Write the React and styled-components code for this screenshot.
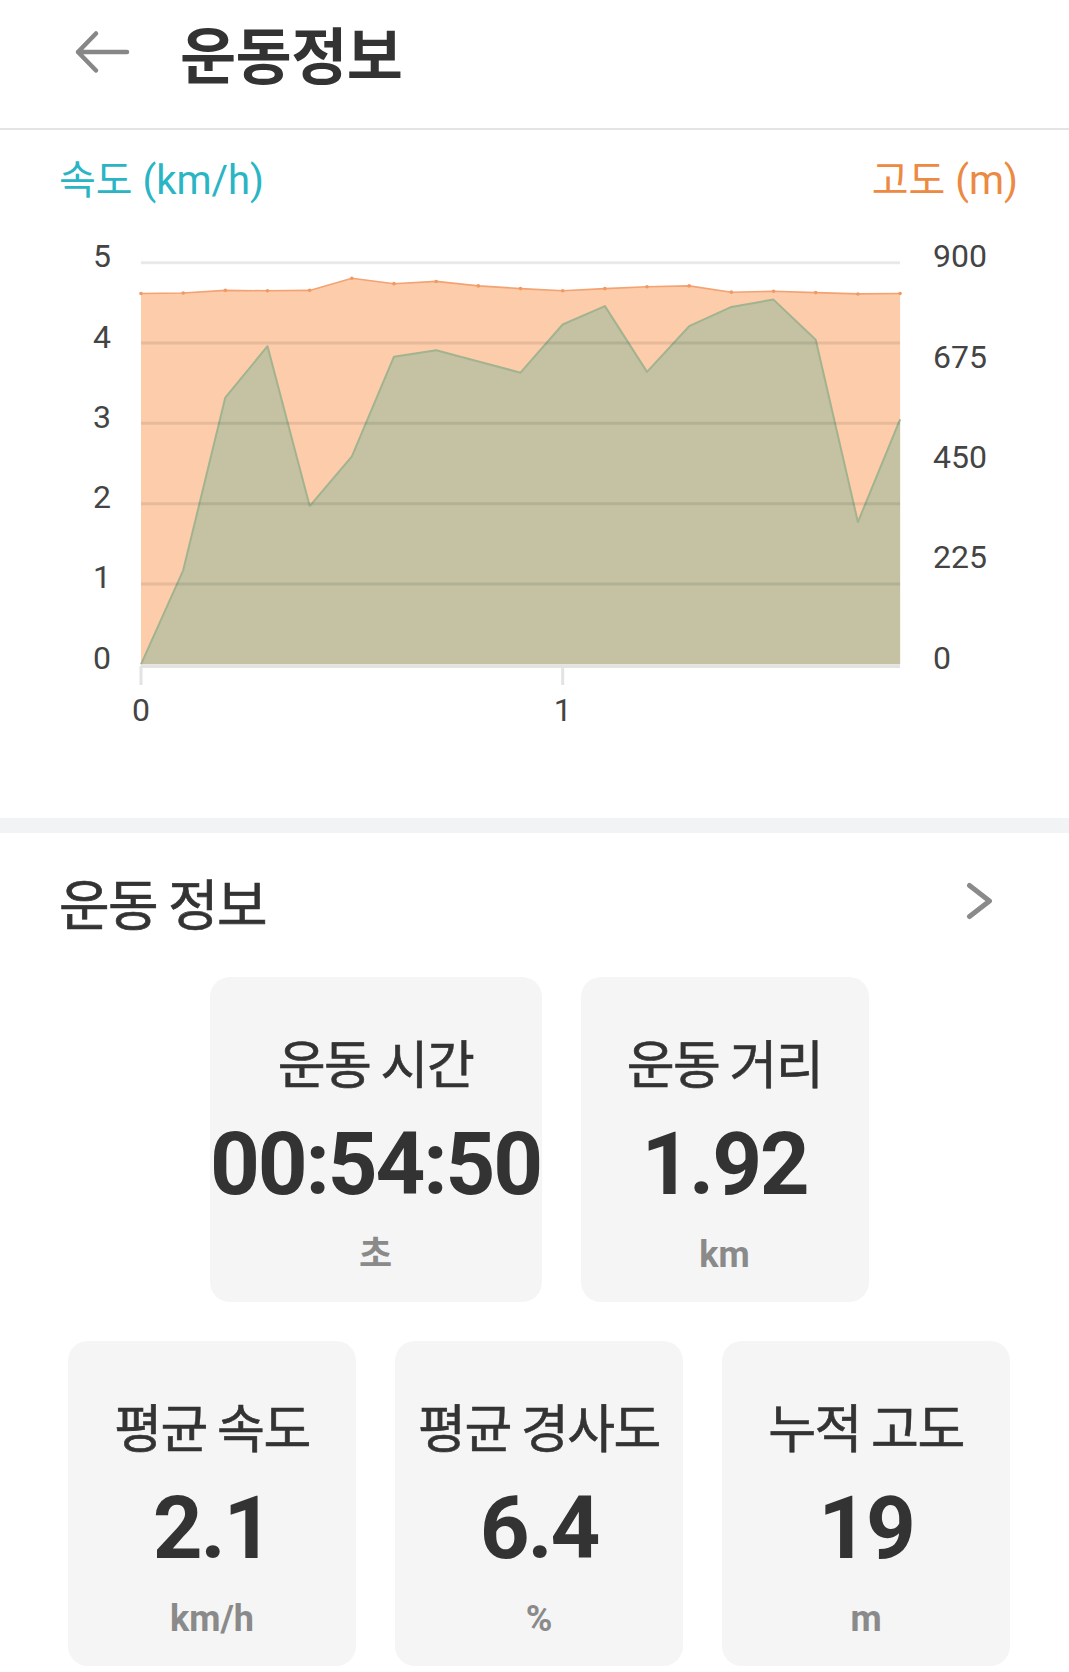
import React from "react";
import styled, { createGlobalStyle } from "styled-components";

const GlobalStyle = createGlobalStyle`
  *, *::before, *::after { box-sizing: border-box; }
  html, body { margin: 0; padding: 0; background: #ffffff; }
  body { font-family: Roboto, "Noto Sans CJK KR", sans-serif; color: #333333; }
`;

const KR = `"Noto Sans CJK KR", "Noto Sans", sans-serif`;
const NUM = `Roboto, "Noto Sans CJK KR", sans-serif`;

const Page = styled.div`
  width: 1069px;
  min-height: 1672px;
  background: #ffffff;
`;

const Header = styled.header`
  height: 130px;
  padding: 0 0 24px 73px;
  display: flex;
  align-items: center;
  border-bottom: 2px solid #e4e4e4;
`;

const BackButton = styled.button`
  width: 58px;
  height: 46px;
  padding: 0;
  border: 0;
  background: none;
  display: flex;
  align-items: center;
  justify-content: center;
  margin-right: 49px;
`;

const Title = styled.h1`
  margin: 0;
  font-family: ${KR};
  font-weight: 700;
  font-size: 61px;
  line-height: 61px;
  letter-spacing: -0.5px;
  color: #333333;
`;

const ChartSection = styled.section`
  padding-bottom: 58px;
`;

const LegendRow = styled.div`
  height: 85px;
  padding: 29px 51px 0 59px;
  display: flex;
  justify-content: space-between;
  align-items: flex-start;
`;

const Legend = styled.span`
  font-family: ${NUM};
  font-size: 40px;
  line-height: 44px;
  color: ${(p) => p.$color};
`;

const ChartSvg = styled.svg`
  display: block;
`;

const Divider = styled.div`
  height: 15px;
  background: #f2f3f5;
`;

const InfoHeader = styled.div`
  height: 136px;
  padding: 0 76px 0 59px;
  display: flex;
  align-items: center;
  justify-content: space-between;
`;

const SectionTitle = styled.h2`
  margin: 0;
  font-family: ${KR};
  font-weight: 400;
  font-size: 55px;
  line-height: 55px;
  letter-spacing: -1.5px;
  color: #333333;
  -webkit-text-stroke: 0.7px #333333;
`;

const CardGrid = styled.div`
  padding: 8px 59px 0 68px;
  display: flex;
  flex-direction: column;
  gap: 39px;
`;

const CardRow = styled.div`
  display: flex;
  justify-content: center;
  gap: 39px;
`;

const Card = styled.div`
  width: ${(p) => p.$width || 288}px;
  height: 325px;
  border-radius: 20px;
  background: #f5f5f5;
  display: flex;
  flex-direction: column;
  align-items: center;
`;

const CardTitle = styled.div`
  margin-top: 59px;
  font-family: ${KR};
  font-weight: 400;
  font-size: 52px;
  line-height: 52px;
  letter-spacing: -1.5px;
  color: #333333;
  -webkit-text-stroke: 0.6px #333333;
  white-space: nowrap;
`;

const CardValue = styled.div`
  margin-top: 33px;
  font-family: ${NUM};
  font-weight: 700;
  font-size: 87px;
  line-height: 87px;
  letter-spacing: -2.2px;
  color: #333333;
  white-space: nowrap;
`;

const CardUnit = styled.div`
  margin-top: 29px;
  font-family: ${NUM};
  font-weight: 700;
  font-size: 36px;
  line-height: 36px;
  color: #8a8a8a;
`;

/* ---------- chart data ---------- */
const X0 = 141;
const XSCALE = 421.7; // px per km
const Y0 = 664.3;
const SPEED_SCALE = 80.32; // px per km/h
const ALT_SCALE = 401.6 / 900; // px per m

const dist = [0, 0.1, 0.2, 0.3, 0.4, 0.5, 0.6, 0.7, 0.8, 0.9, 1.0, 1.1, 1.2, 1.3, 1.4, 1.5, 1.6, 1.7, 1.8];
const speed = [0, 1.17, 3.32, 3.96, 1.97, 2.59, 3.83, 3.91, 3.77, 3.63, 4.23, 4.46, 3.64, 4.21, 4.45, 4.54, 4.04, 1.77, 3.05];
const alt = [831, 832, 838, 837, 838, 865, 853, 858, 848, 842, 837, 842, 846, 848, 834, 836, 833, 830, 831];

const px = (d) => X0 + d * XSCALE;
const sy = (v) => Y0 - v * SPEED_SCALE;
const ay = (v) => Y0 - v * ALT_SCALE;
const XEND = px(dist[dist.length - 1]);

const linePts = (ys) => dist.map((d, i) => `${px(d).toFixed(1)},${ys[i].toFixed(1)}`).join(" L");
const altLine = "M" + linePts(alt.map(ay));
const speedLine = "M" + linePts(speed.map(sy));
const altArea = `M${X0},${Y0} L${linePts(alt.map(ay))} L${XEND.toFixed(1)},${Y0} Z`;
const speedArea = `${speedLine} L${XEND.toFixed(1)},${Y0} Z`;

const leftTicks = [5, 4, 3, 2, 1, 0];
const rightTicks = [900, 675, 450, 225, 0];

function Chart() {
  return (
    <ChartSvg width="1069" height="545" viewBox="0 215 1069 545">
      <path d={altArea} fill="#fdccaa" />
      <path d={altLine} fill="none" stroke="#f3a272" strokeWidth="1.6" />
      {dist.map((d, i) => (
        <circle key={i} cx={px(d)} cy={ay(alt[i])} r="1.8" fill="#ef9a63" />
      ))}
      <path d={speedArea} fill="#c4c2a2" />
      <path d={speedLine} fill="none" stroke="#a2b38f" strokeWidth="2" strokeLinejoin="round" />
      {leftTicks.slice(0, 5).map((v) => (
        <line key={v} x1={X0} x2={XEND} y1={sy(v)} y2={sy(v)} stroke="rgba(0,0,0,0.085)" strokeWidth="3" />
      ))}
      <line x1={X0} x2={XEND} y1={666.3} y2={666.3} stroke="#e3e3e3" strokeWidth="3.5" />
      <line x1={X0} x2={X0} y1={666} y2={685} stroke="#e3e3e3" strokeWidth="3" />
      <line x1={px(1)} x2={px(1)} y1={666} y2={685} stroke="#e3e3e3" strokeWidth="3" />
      <g fontFamily="Roboto, sans-serif" fontSize="32" fill="#444444">
        {leftTicks.map((v) => (
          <text key={v} x="111" y={sy(v) + 4.5} textAnchor="end">{v}</text>
        ))}
        {rightTicks.map((v) => (
          <text key={v} x="933" y={ay(v) + 4.5}>{v}</text>
        ))}
        <text x={X0} y="721" textAnchor="middle">0</text>
        <text x={px(1)} y="721" textAnchor="middle">1</text>
      </g>
    </ChartSvg>
  );
}

const stats = [
  [
    { title: "운동 시간", value: "00:54:50", unit: "초", width: 332 },
    { title: "운동 거리", value: "1.92", unit: "km" },
  ],
  [
    { title: "평균 속도", value: "2.1", unit: "km/h" },
    { title: "평균 경사도", value: "6.4", unit: "%" },
    { title: "누적 고도", value: "19", unit: "m" },
  ],
];

export default function App() {
  return (
    <Page>
      <GlobalStyle />
      <Header>
        <BackButton aria-label="back">
          <svg width="58" height="46" viewBox="0 0 58 46">
            <path d="M5 23 H54 M23 4.5 L5 23 L23 41.5" fill="none" stroke="#878787" strokeWidth="4.5" strokeLinecap="round" strokeLinejoin="round" />
          </svg>
        </BackButton>
        <Title>운동정보</Title>
      </Header>

      <ChartSection>
        <LegendRow>
          <Legend $color="#29b5c4">속도 (km/h)</Legend>
          <Legend $color="#ec8942">고도 (m)</Legend>
        </LegendRow>
        <Chart />
      </ChartSection>

      <Divider />

      <section>
        <InfoHeader>
          <SectionTitle>운동 정보</SectionTitle>
          <svg width="27" height="38" viewBox="0 0 27 38">
            <path d="M3.5 3.5 L23.5 19 L3.5 34.5" fill="none" stroke="#8a8a8a" strokeWidth="5" strokeLinecap="round" strokeLinejoin="round" />
          </svg>
        </InfoHeader>
        <CardGrid>
          {stats.map((row, r) => (
            <CardRow key={r}>
              {row.map((s) => (
                <Card key={s.title} $width={s.width}>
                  <CardTitle>{s.title}</CardTitle>
                  <CardValue>{s.value}</CardValue>
                  <CardUnit>{s.unit}</CardUnit>
                </Card>
              ))}
            </CardRow>
          ))}
        </CardGrid>
      </section>
    </Page>
  );
}
